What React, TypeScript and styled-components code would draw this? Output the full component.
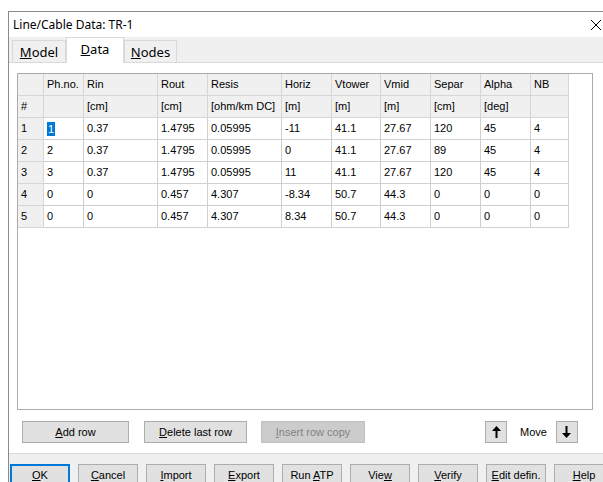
import { Fragment } from 'react'
import styled, { createGlobalStyle } from 'styled-components'

const GlobalStyle = createGlobalStyle`
  html, body {
    margin: 0;
    padding: 0;
    width: 603px;
    height: 482px;
    overflow: hidden;
    background: #fff;
  }
  body {
    font-family: "Liberation Sans", Arial, sans-serif;
    font-size: 11px;
    color: #000;
  }
`

const Window = styled.div`
  margin: 11px 0 0 8px;
  width: 610px;
  border-top: 1px solid #8a8a8a;
  border-left: 1px solid #8a8a8a;
  background: #f0f0f0;
`

const TitleBar = styled.div`
  height: 25px;
  display: flex;
  align-items: center;
  justify-content: space-between;
  padding-left: 4px;
  background: #fff;
  font-family: "Noto Sans", "Open Sans", sans-serif;
  font-size: 12px;
`

const CloseBox = styled.div`
  width: 46px;
  height: 25px;
  display: flex;
  align-items: center;
  justify-content: center;
`

const TabStrip = styled.div`
  height: 25px;
  display: flex;
  align-items: flex-end;
  padding-left: 3px;
  background: #f0f0f0;
`

const Tab = styled.div<{ $active?: boolean; $w: number }>`
  position: relative;
  z-index: ${p => (p.$active ? 1 : 0)};
  box-sizing: border-box;
  width: ${p => p.$w}px;
  height: ${p => (p.$active ? 26 : 22)}px;
  margin-bottom: ${p => (p.$active ? -1 : 0)}px;
  padding-bottom: ${p => (p.$active ? 3 : 0)}px;
  display: flex;
  align-items: center;
  justify-content: center;
  border: 1px solid #d9d9d9;
  border-bottom: none;
  background: ${p => (p.$active ? '#fff' : '#f0f0f0')};
  font-family: "Noto Sans", "Open Sans", sans-serif;
  font-size: 13px;
`

const Key = styled.u`
  text-decoration: underline;
  text-underline-offset: 1px;
`

const Panel = styled.div`
  background: #fff;
  border-top: 1px solid #d9d9d9;
  border-bottom: 1px solid #d9d9d9;
  padding: 10px 0 10px 8px;
`

const GridBox = styled.div`
  box-sizing: border-box;
  width: 576px;
  height: 337px;
  border: 1px solid #ababab;
  background: #fff;
  overflow: hidden;
`

const Sheet = styled.div`
  display: grid;
  grid-template-columns: 26px 40px 74px 50px 74px 50px 49px 50px 50px 50px 38px;
  grid-auto-rows: 22px;
  width: max-content;
`

const Cell = styled.div<{ $fixed?: boolean }>`
  box-sizing: border-box;
  padding-left: 3px;
  line-height: 21px;
  white-space: nowrap;
  overflow: hidden;
  border-right: 1px solid ${p => (p.$fixed ? '#d6d6d6' : '#d0d0d0')};
  border-bottom: 1px solid ${p => (p.$fixed ? '#d6d6d6' : '#d0d0d0')};
  background: ${p => (p.$fixed ? '#f0f0f0' : '#fff')};
`

const Selected = styled.span`
  display: inline-block;
  line-height: 14px;
  padding: 0 1px;
  background: #0078d7;
  color: #fff;
  vertical-align: middle;
`

const ActionRow = styled.div`
  margin-top: 11px;
  height: 22px;
  display: flex;
  align-items: center;
  padding-left: 5px;
`

const Button = styled.button<{ $w?: number; $gap?: number; $default?: boolean }>`
  box-sizing: border-box;
  flex: none;
  width: ${p => p.$w ?? 60}px;
  height: 22px;
  margin: 0 ${p => p.$gap ?? 0}px 0 0;
  padding: 0;
  line-height: 20px;
  text-align: center;
  border: 1px solid ${p => (p.$default ? '#0078d7' : '#adadad')};
  box-shadow: ${p => (p.$default ? 'inset 0 0 0 1px #0078d7' : 'none')};
  background: #e1e1e1;
  color: #000;
  font-family: "Liberation Sans", Arial, sans-serif;
  font-size: 11px;
  white-space: nowrap;

  &:disabled {
    background: #cccccc;
    border-color: #bfbfbf;
    color: #838383;
  }
`

const MoveGroup = styled.div`
  margin-left: 120px;
  display: flex;
  align-items: center;
`

const ArrowButton = styled.button`
  box-sizing: border-box;
  width: 22px;
  height: 22px;
  padding: 0;
  display: flex;
  align-items: center;
  justify-content: center;
  border: 1px solid #adadad;
  background: #e1e1e1;
`

const MoveLabel = styled.span`
  margin: 0 9px 0 13px;
`

const Footer = styled.div`
  display: flex;
  gap: 8px;
  padding: 10px 0 20px 1px;
  background: #f0f0f0;
`

const columns = ['', 'Ph.no.', 'Rin', 'Rout', 'Resis', 'Horiz', 'Vtower', 'Vmid', 'Separ', 'Alpha', 'NB']
const units = ['#', '', '[cm]', '[cm]', '[ohm/km DC]', '[m]', '[m]', '[m]', '[cm]', '[deg]', '']

const rows = [
  ['1', '0.37', '1.4795', '0.05995', '-11', '41.1', '27.67', '120', '45', '4'],
  ['2', '0.37', '1.4795', '0.05995', '0', '41.1', '27.67', '89', '45', '4'],
  ['3', '0.37', '1.4795', '0.05995', '11', '41.1', '27.67', '120', '45', '4'],
  ['0', '0', '0.457', '4.307', '-8.34', '50.7', '44.3', '0', '0', '0'],
  ['0', '0', '0.457', '4.307', '8.34', '50.7', '44.3', '0', '0', '0'],
]

const Arrow = ({ down }: { down?: boolean }) => (
  <svg width="9" height="12" viewBox="0 0 9 12" style={down ? { transform: 'rotate(180deg)' } : undefined}>
    <path d="M4.5 0 L9 5 H5.5 V12 H3.5 V5 H0 Z" fill="#000" />
  </svg>
)

const App = () => {
  return (
    <>
      <GlobalStyle />
      <Window>
        <TitleBar>
          <span>Line/Cable Data: TR-1</span>
          <CloseBox>
            <svg width="10" height="10" viewBox="0 0 10 10">
              <path d="M0 0 L10 10 M10 0 L0 10" stroke="#000" strokeWidth="1" />
            </svg>
          </CloseBox>
        </TitleBar>

        <TabStrip>
          <Tab $w={54}><Key>M</Key>odel</Tab>
          <Tab $w={58} $active><Key>D</Key>ata</Tab>
          <Tab $w={53}><Key>N</Key>odes</Tab>
        </TabStrip>

        <Panel>
          <GridBox>
            <Sheet>
              {columns.map((c, i) => <Cell key={'h' + i} $fixed>{c}</Cell>)}
              {units.map((u, i) => <Cell key={'u' + i} $fixed>{u}</Cell>)}
              {rows.map((r, ri) => (
                <Fragment key={ri}>
                  <Cell $fixed>{ri + 1}</Cell>
                  {r.map((v, ci) => (
                    <Cell key={ci}>
                      {ri === 0 && ci === 0 ? <Selected>{v}</Selected> : v}
                    </Cell>
                  ))}
                </Fragment>
              ))}
            </Sheet>
          </GridBox>

          <ActionRow>
            <Button $w={107} $gap={15}><Key>A</Key>dd row</Button>
            <Button $w={103} $gap={14}><Key>D</Key>elete last row</Button>
            <Button $w={104} disabled><Key>I</Key>nsert row copy</Button>
            <MoveGroup>
              <ArrowButton><Arrow /></ArrowButton>
              <MoveLabel>Move</MoveLabel>
              <ArrowButton><Arrow down /></ArrowButton>
            </MoveGroup>
          </ActionRow>
        </Panel>

        <Footer>
          <Button $default><Key>O</Key>K</Button>
          <Button><Key>C</Key>ancel</Button>
          <Button><Key>I</Key>mport</Button>
          <Button><Key>E</Key>xport</Button>
          <Button>Run <Key>A</Key>TP</Button>
          <Button>Vie<Key>w</Key></Button>
          <Button><Key>V</Key>erify</Button>
          <Button><Key>E</Key>dit defin.</Button>
          <Button><Key>H</Key>elp</Button>
        </Footer>
      </Window>
    </>
  )
}

export default App
